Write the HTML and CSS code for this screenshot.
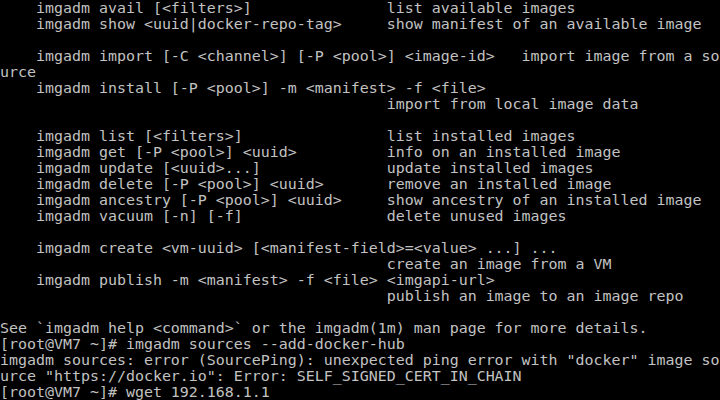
FILE: index.html
```html
<!DOCTYPE html>
<html>
<head>
<meta charset="utf-8">
<link rel="stylesheet" href="styles.css">
</head>
<body>
<pre class="console">    imgadm avail [&lt;filters&gt;]               list available images
    imgadm show &lt;uuid|docker-repo-tag&gt;     show manifest of an available image

    imgadm import [-C &lt;channel&gt;] [-P &lt;pool&gt;] &lt;image-id&gt;   import image from a so
urce
    imgadm install [-P &lt;pool&gt;] -m &lt;manifest&gt; -f &lt;file&gt;
                                           import from local image data

    imgadm list [&lt;filters&gt;]                list installed images
    imgadm get [-P &lt;pool&gt;] &lt;uuid&gt;          info on an installed image
    imgadm update [&lt;uuid&gt;...]              update installed images
    imgadm delete [-P &lt;pool&gt;] &lt;uuid&gt;       remove an installed image
    imgadm ancestry [-P &lt;pool&gt;] &lt;uuid&gt;     show ancestry of an installed image
    imgadm vacuum [-n] [-f]                delete unused images

    imgadm create &lt;vm-uuid&gt; [&lt;manifest-field&gt;=&lt;value&gt; ...] ...
                                           create an image from a VM
    imgadm publish -m &lt;manifest&gt; -f &lt;file&gt; &lt;imgapi-url&gt;
                                           publish an image to an image repo

See `imgadm help &lt;command&gt;` or the imgadm(1m) man page for more details.
[root@VM7 ~]# imgadm sources --add-docker-hub
imgadm sources: error (SourcePing): unexpected ping error with "docker" image so
urce "https://docker.io": Error: SELF_SIGNED_CERT_IN_CHAIN
[root@VM7 ~]# wget 192.168.1.1</pre>
</body>
</html>
```
FILE: styles.css
```css
html, body {
  margin: 0;
  padding: 0;
  background: #000;
  width: 720px;
  height: 400px;
  overflow: hidden;
}
.console {
  margin: 0;
  padding: 0;
  font-family: "DejaVu Sans Mono", "Liberation Mono", monospace;
  font-size: 14.95px;
  line-height: 16px;
  color: #c2c2c2;
  white-space: pre;
}
```
